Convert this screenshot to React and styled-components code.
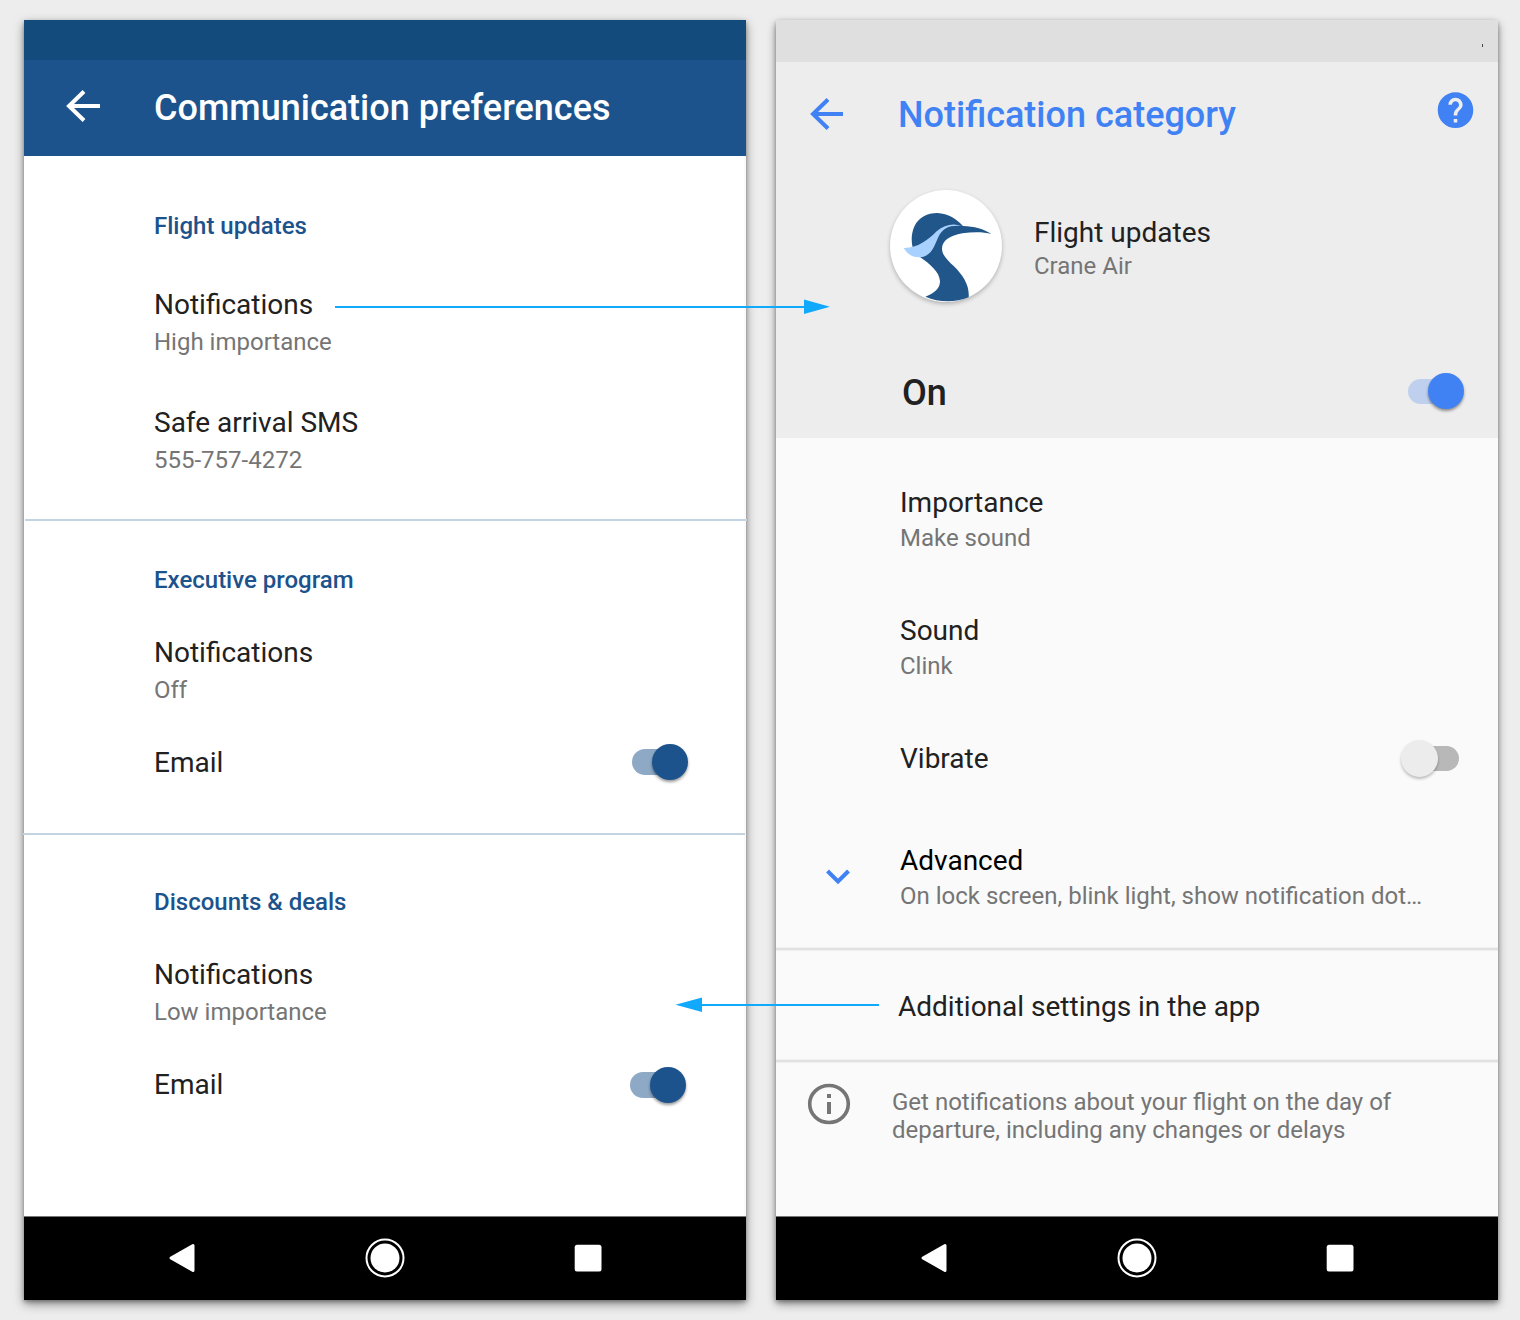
import React from "react";
import styled, { createGlobalStyle } from "styled-components";

const GlobalStyle = createGlobalStyle`
  * { box-sizing: border-box; }
  body {
    margin: 0;
    background: #ededed;
    font-family: Roboto, "Liberation Sans", sans-serif;
  }
`;

const Board = styled.main`
  position: relative;
  display: flex;
  gap: 30px;
  width: 1520px;
  height: 1320px;
  padding: 20px 22px 20px 24px;
  overflow: hidden;
`;

const Phone = styled.section`
  display: flex;
  flex-direction: column;
  width: 722px;
  height: 1280px;
  background: ${(p) => p.$bg};
  border-radius: ${(p) => p.$radius || 0};
  box-shadow: 0 2px 4px rgba(0, 0, 0, 0.3), 0 4px 10px rgba(0, 0, 0, 0.4);
`;

const StatusBar = styled.div`
  display: flex;
  justify-content: flex-end;
  flex: none;
  height: ${(p) => p.$height}px;
  padding: 24px 15px 0 0;
  background: ${(p) => p.$bg};
  border-radius: inherit;
`;

const StatusTick = styled.i`
  width: 1px;
  height: 3px;
  background: #444;
`;

const BlueBar = styled.header`
  display: flex;
  align-items: center;
  flex: none;
  height: 96px;
  padding-left: 42px;
  gap: 53px;
  background: #1c538c;
`;

const BarTitle = styled.h1`
  margin: 0;
  font-size: 36px;
  font-weight: 500;
  line-height: 48px;
  color: ${(p) => p.$color};
  white-space: nowrap;
`;

const Content = styled.div`
  flex: 1;
  min-height: 0;
  border-right: 2px solid #fafafa;
`;

const Group = styled.section`
  height: ${(p) => p.$height}px;
  padding: ${(p) => p.$top}px 56px 0 130px;
`;

const GroupTitle = styled.h2`
  margin: 0 0 ${(p) => p.$gap}px;
  font-size: 24px;
  font-weight: 500;
  line-height: 28px;
  color: #1c538c;
`;

const Entry = styled.div`
  margin-bottom: ${(p) => p.$gap || 0}px;
`;

const Label = styled.div`
  font-size: 28px;
  line-height: 36px;
  color: ${(p) => p.$color || "#212121"};
  white-space: nowrap;
`;

const Detail = styled.div`
  margin-top: ${(p) => p.$gap ?? 5}px;
  font-size: 24px;
  line-height: 28px;
  color: #757575;
  white-space: nowrap;
`;

const SwitchRow = styled.div`
  display: flex;
  justify-content: space-between;
  align-items: center;
  height: 36px;
  padding-right: ${(p) => p.$inset || 0}px;
`;

const Switch = styled.span`
  display: grid;
  flex: none;
  align-items: center;
  width: ${(p) => (p.$on ? 56 : 58)}px;
  height: 36px;
  margin-bottom: ${(p) => p.$lift || 0}px;
`;

const Groove = styled.span`
  grid-area: 1 / 1;
  justify-self: ${(p) => (p.$on ? "start" : "end")};
  width: 46px;
  height: ${(p) => p.$height}px;
  border-radius: 13px;
  background: ${(p) => p.$color};
`;

const Thumb = styled.span`
  grid-area: 1 / 1;
  justify-self: ${(p) => (p.$on ? "end" : "start")};
  width: ${(p) => p.$size}px;
  height: ${(p) => p.$size}px;
  border-radius: 50%;
  background: ${(p) => p.$color};
  box-shadow: 0 2px 3px rgba(0, 0, 0, ${(p) => p.$shade});
`;

const Rule = styled.hr`
  width: ${(p) => p.$width || 722}px;
  height: 2px;
  margin: 0 0 0 ${(p) => p.$shift || 0}px;
  border: 0;
  background: #c4d3e1;
`;

const SoftRule = styled.hr`
  width: 722px;
  height: 4px;
  margin: 0;
  border: solid #f0f0f0;
  border-width: 1px 0;
  background: #e1e1e1;
`;

const NavBar = styled.nav`
  display: flex;
  align-items: center;
  flex: none;
  height: 84px;
  padding: 0 0 2px 144px;
  border-top: 1px solid #777;
  background: #000;
`;

const NavIcon = styled.svg`
  display: block;
  flex: none;
  margin-right: ${(p) => p.$gap || 0}px;
`;

const ArrowIcon = styled.svg`
  display: block;
  flex: none;
  margin-bottom: ${(p) => p.$lift || 0}px;
`;

const CategoryHead = styled.header`
  flex: none;
  height: 376px;
  background: #ededed;
`;

const CategoryBar = styled.div`
  display: flex;
  align-items: center;
  height: 104px;
  padding: 0 24px 0 34px;
`;

const CategoryTitle = styled(BarTitle)`
  flex: 1;
  margin-left: 54px;
  padding-top: 1px;
`;

const HelpIcon = styled.svg`
  display: block;
  margin-top: -7px;
`;

const AppInfo = styled.div`
  display: flex;
  gap: 32px;
  height: 196px;
  padding: 24px 0 0 114px;
`;

const Avatar = styled.div`
  width: 112px;
  height: 112px;
  border-radius: 50%;
  background: #fff;
  box-shadow: 0 2px 4px rgba(0, 0, 0, 0.25);
`;

const AppText = styled.div`
  padding-top: 25px;
`;

const MasterRow = styled.div`
  display: flex;
  justify-content: space-between;
  align-items: center;
  height: 48px;
  margin-top: 5px;
  padding: 0 34px 0 126px;
`;

const MasterLabel = styled.strong`
  margin-top: 4px;
  font-size: 36px;
  font-weight: 500;
  line-height: 48px;
  color: #212121;
`;

const Setting = styled.div`
  height: ${(p) => p.$height}px;
  padding-left: 124px;
`;

const SettingList = styled.div`
  padding-top: 47px;
  height: 509px;
`;

const AdvancedRow = styled.div`
  display: flex;
  padding-left: 50px;
`;

const Chevron = styled.svg`
  display: block;
  flex: none;
  width: 24px;
  height: 16px;
  margin: 26px 50px 0 0;
`;

const AppLink = styled.div`
  display: flex;
  align-items: center;
  height: 108px;
  padding: 3px 0 0 122px;
`;

const Footnote = styled.div`
  display: flex;
  padding: 20px 0 0 31px;
`;

const FootText = styled.p`
  width: 540px;
  margin: 5px 0 0 41px;
  font-size: 24px;
  line-height: 28px;
  color: #757575;
`;

const FlowArrows = styled.svg`
  position: absolute;
  left: 0;
  top: 0;
  pointer-events: none;
`;

function BackArrow({ color, width, lift }) {
  return (
    <ArrowIcon width={width + 2} height="36" viewBox={`0 0 ${width + 2} 36`} fill="none" $lift={lift}>
      <path d={`M18 3.500L3 18l15 14.500M3 18H${width + 1}`} stroke={color} strokeWidth="4" />
    </ArrowIcon>
  );
}

function Toggle({ on, track, thumb, height = 25, size = 36, shade = 0.4, lift }) {
  return (
    <Switch $on={on} $lift={lift}>
      <Groove $on={on} $color={track} $height={height} />
      <Thumb $on={on} $size={size} $color={thumb} $shade={shade} />
    </Switch>
  );
}

function AndroidNav() {
  return (
    <NavBar>
      <NavIcon width="28" height="32" viewBox="0 0 28 32" $gap={169}>
        <path d="M3 16L25 3.500V28.500Z" fill="#fff" stroke="#fff" strokeWidth="3" strokeLinejoin="round" />
      </NavIcon>
      <NavIcon width="40" height="40" viewBox="0 0 40 40" $gap={169}>
        <circle cx="20" cy="20" r="18.500" fill="none" stroke="#fff" strokeWidth="2" />
        <circle cx="20" cy="20" r="14.500" fill="#fff" />
      </NavIcon>
      <NavIcon width="28" height="28" viewBox="0 0 28 28">
        <rect x="0.700" y="0.700" width="26.800" height="26.800" rx="2.500" fill="#fff" />
      </NavIcon>
    </NavBar>
  );
}

function CraneLogo() {
  return (
    <svg width="112" height="112" viewBox="360 539 336 336">
      <path
        d="M428 712C423 690 424 667 434 646C447 621 472 608 502 608C534 609 561 627 579 647C612 648 642 656 664 671C641 664 608 664 577 669C540 676 516 690 516 716C517 736 533 750 552 768C580 796 599 826 596 861C556 877 507 877 466 859C494 849 510 834 510 813C509 785 481 762 450 740Z"
        fill="#20568a"
      />
      <path
        d="M401 713C442 714 474 689 500 663C524 642 550 638 577 647C540 644 520 651 505 680C493 706 486 737 450 741C427 742 411 730 401 713Z"
        fill="#a8d1ff"
      />
    </svg>
  );
}

function PreferencesScreen() {
  return (
    <Phone $bg="#fff">
      <StatusBar $height={40} $bg="#124b7c" />
      <BlueBar>
        <BackArrow color="#fff" width={33} lift={4} />
        <BarTitle $color="#fff">Communication preferences</BarTitle>
      </BlueBar>
      <Content>
        <Group $height={363} $top={56}>
          <GroupTitle $gap={47}>Flight updates</GroupTitle>
          <Entry $gap={49}>
            <Label>Notifications</Label>
            <Detail>High importance</Detail>
          </Entry>
          <Entry>
            <Label>Safe arrival SMS</Label>
            <Detail>555-757-4272</Detail>
          </Entry>
        </Group>
        <Rule $shift={1} />
        <Group $height={312} $top={45}>
          <GroupTitle $gap={41}>Executive program</GroupTitle>
          <Entry $gap={41}>
            <Label>Notifications</Label>
            <Detail>Off</Detail>
          </Entry>
          <SwitchRow>
            <Label>Email</Label>
            <Toggle on track="#8ea9c6" thumb="#1c538c" height={26} lift={2} />
          </SwitchRow>
        </Group>
        <Rule $shift={-1} />
        <Group $height={380} $top={53}>
          <GroupTitle $gap={41}>Discounts &amp; deals</GroupTitle>
          <Entry $gap={41}>
            <Label>Notifications</Label>
            <Detail>Low importance</Detail>
          </Entry>
          <SwitchRow $inset={2}>
            <Label>Email</Label>
            <Toggle on track="#8ea9c6" thumb="#1c538c" height={26} lift={1} />
          </SwitchRow>
        </Group>
      </Content>
      <AndroidNav />
    </Phone>
  );
}

function CategoryScreen() {
  return (
    <Phone $bg="#fafafa" $radius="3px 3px 0 0">
      <StatusBar $height={42} $bg="#dfdfdf">
        <StatusTick />
      </StatusBar>
      <CategoryHead>
        <CategoryBar>
          <BackArrow color="#4082f4" width={32} />
          <CategoryTitle $color="#4082f4">Notification category</CategoryTitle>
          <HelpIcon width="37" height="37" viewBox="1.600 1.800 20.800 20.800">
            <path
              fill="#4082f4"
              d="M12 2C6.480 2 2 6.480 2 12s4.480 10 10 10 10-4.480 10-10S17.520 2 12 2zm1 17h-2v-2h2v2zm2.070-7.750l-.9.920C13.450 12.900 13 13.500 13 15h-2v-.5c0-1.100.45-2.100 1.170-2.830l1.240-1.260c.37-.36.59-.86.59-1.410 0-1.100-.9-2-2-2s-2 .9-2 2H8c0-2.210 1.790-4 4-4s4 1.790 4 4c0 .88-.36 1.680-.93 2.250z"
            />
          </HelpIcon>
        </CategoryBar>
        <AppInfo>
          <Avatar>
            <CraneLogo />
          </Avatar>
          <AppText>
            <Label>Flight updates</Label>
            <Detail $gap={1}>Crane Air</Detail>
          </AppText>
        </AppInfo>
        <MasterRow>
          <MasterLabel>On</MasterLabel>
          <Toggle on track="#bfd0ef" thumb="#4082f4" />
        </MasterRow>
      </CategoryHead>
      <Content>
        <SettingList>
          <Setting $height={128}>
            <Label>Importance</Label>
            <Detail $gap={3}>Make sound</Detail>
          </Setting>
          <Setting $height={128}>
            <Label>Sound</Label>
            <Detail $gap={3}>Clink</Detail>
          </Setting>
          <Setting $height={102}>
            <SwitchRow $inset={37}>
              <Label>Vibrate</Label>
              <Toggle track="#b8b8b8" thumb="#ececec" size={37} shade={0.25} lift={2} />
            </SwitchRow>
          </Setting>
          <AdvancedRow>
            <Chevron viewBox="0 0 24 16" fill="none">
              <path d="M1.500 2L12 12.500L22.500 2" stroke="#4082f4" strokeWidth="4" />
            </Chevron>
            <Entry>
              <Label $color="#000">Advanced</Label>
              <Detail $gap={3}>On lock screen, blink light, show notification dot…</Detail>
            </Entry>
          </AdvancedRow>
        </SettingList>
        <SoftRule />
        <AppLink>
          <Label>Additional settings in the app</Label>
        </AppLink>
        <SoftRule />
        <Footnote>
          <svg width="44" height="42" viewBox="0 0 44 42">
            <ellipse cx="22" cy="21" rx="19.300" ry="18.500" fill="none" stroke="#757575" strokeWidth="3.600" />
            <path d="M20 11h4v4h-4zM20 19h4v12h-4z" fill="#757575" />
          </svg>
          <FootText>
            Get notifications about your flight on the day of departure, including any changes or delays
          </FootText>
        </Footnote>
      </Content>
      <AndroidNav />
    </Phone>
  );
}

export default function App() {
  return (
    <>
      <GlobalStyle />
      <Board>
        <PreferencesScreen />
        <CategoryScreen />
        <FlowArrows width="1520" height="1320" viewBox="0 0 1520 1320">
          <g fill="#11a9fb">
            <path d="M335 306h470v2H335z" />
            <path d="M804 299.500L830 306.800L804 314z" />
            <path d="M701 1004h178v2H701z" />
            <path d="M702 997.500L675.500 1004.800L702 1012z" />
          </g>
        </FlowArrows>
      </Board>
    </>
  );
}
